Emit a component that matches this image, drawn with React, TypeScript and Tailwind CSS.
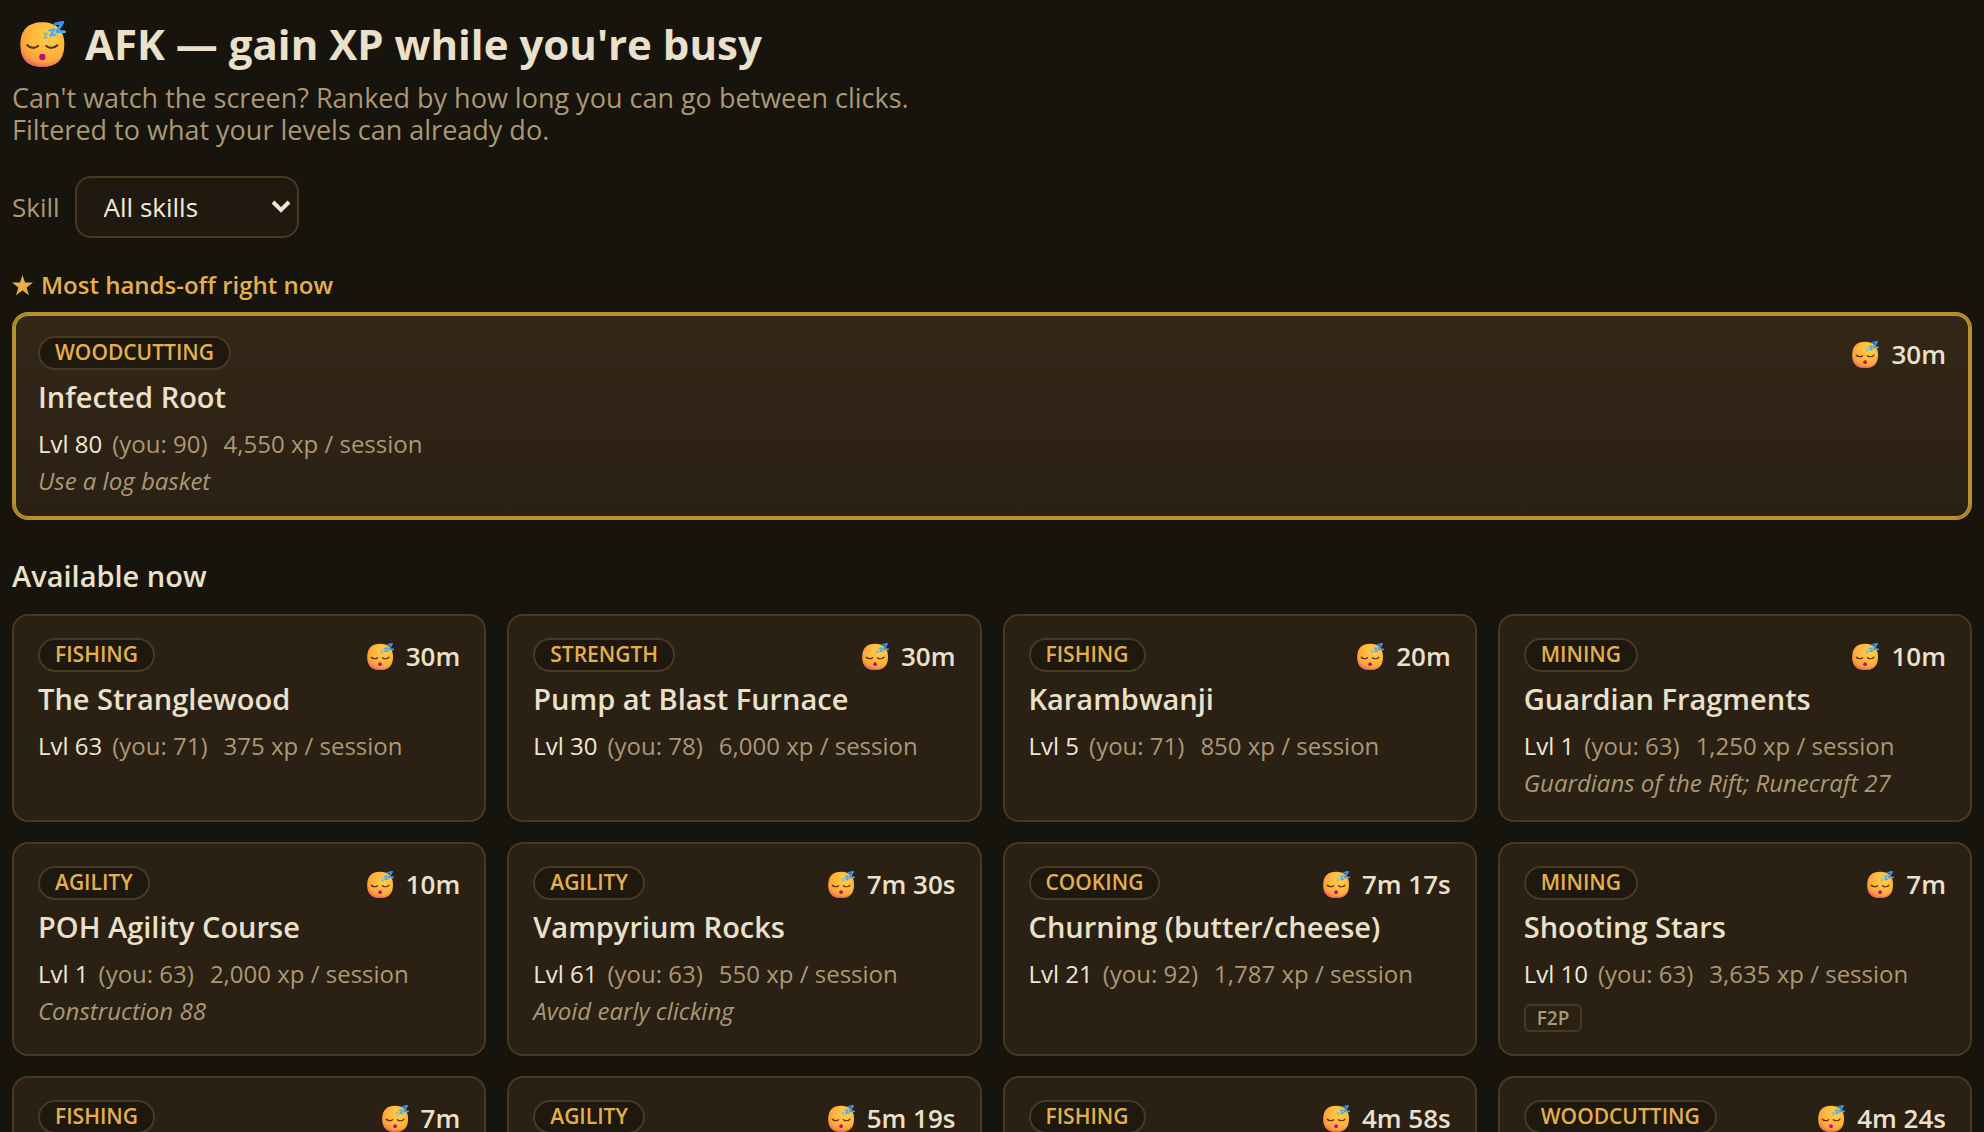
import { useId } from "react";

type Method = {
  skill: string;
  time: string;
  name?: string;
  level?: number;
  you?: number;
  xp?: string;
  note?: string;
  f2p?: boolean;
};

const best: Method = {
  skill: "Woodcutting",
  time: "30m",
  name: "Infected Root",
  level: 80,
  you: 90,
  xp: "4,550",
  note: "Use a log basket",
};

const methods: Method[] = [
  { skill: "Fishing", time: "30m", name: "The Stranglewood", level: 63, you: 71, xp: "375" },
  { skill: "Strength", time: "30m", name: "Pump at Blast Furnace", level: 30, you: 78, xp: "6,000" },
  { skill: "Fishing", time: "20m", name: "Karambwanji", level: 5, you: 71, xp: "850" },
  { skill: "Mining", time: "10m", name: "Guardian Fragments", level: 1, you: 63, xp: "1,250", note: "Guardians of the Rift; Runecraft 27" },
  { skill: "Agility", time: "10m", name: "POH Agility Course", level: 1, you: 63, xp: "2,000", note: "Construction 88" },
  { skill: "Agility", time: "7m 30s", name: "Vampyrium Rocks", level: 61, you: 63, xp: "550", note: "Avoid early clicking" },
  { skill: "Cooking", time: "7m 17s", name: "Churning (butter/cheese)", level: 21, you: 92, xp: "1,787" },
  { skill: "Mining", time: "7m", name: "Shooting Stars", level: 10, you: 63, xp: "3,635", f2p: true },
  { skill: "Fishing", time: "7m" },
  { skill: "Agility", time: "5m 19s" },
  { skill: "Fishing", time: "4m 58s" },
  { skill: "Woodcutting", time: "4m 24s" },
];

function SleepyFace({ className }: { className: string }) {
  const id = useId();
  const skin = `${id}-skin`;
  const blush = `${id}-blush`;
  const zed = `${id}-zed`;
  return (
    <svg viewBox="20 20 138 138" className={className} aria-hidden="true">
      <defs>
        <radialGradient id={skin} cx="0.66" cy="0.3" r="0.75">
          <stop offset="0" stopColor="#ffd04a" />
          <stop offset="0.55" stopColor="#ffb63c" />
          <stop offset="1" stopColor="#f79a3a" />
        </radialGradient>
        <radialGradient id={blush} cx="0.56" cy="0.3" r="0.72">
          <stop offset="0.82" stopColor="#f0605f" stopOpacity="0" />
          <stop offset="1" stopColor="#ee5f78" stopOpacity="0.9" />
        </radialGradient>
        <linearGradient id={zed} x1="0" y1="0" x2="1" y2="1">
          <stop offset="0" stopColor="#2f7fe6" />
          <stop offset="1" stopColor="#45b4fb" />
        </linearGradient>
      </defs>
      <path
        d="M87 24C128 24 153 46 153 91C153 136 130 157 87 157C44 157 21 136 21 91C21 46 46 24 87 24Z"
        fill={`url(#${skin})`}
      />
      <path
        d="M87 24C128 24 153 46 153 91C153 136 130 157 87 157C44 157 21 136 21 91C21 46 46 24 87 24Z"
        fill={`url(#${blush})`}
      />
      <g fill="none" stroke="#5a3225" strokeWidth="6.5" strokeLinecap="round">
        <path d="M42 93C50 102 65 103 74 95" />
        <path d="M99 95C108 103 123 102 132 93" />
      </g>
      <ellipse cx="87" cy="128" rx="9.5" ry="10" fill="#bd0a86" />
      <g fill="none" strokeLinejoin="round" strokeLinecap="round">
        <path d="M92 58L102 57L92 71L103 70" stroke="#8fb3b5" strokeWidth="5" />
        <path d="M108 48L123 45L111 64L126 61" stroke="#4cadea" strokeWidth="7" />
        <path d="M125 29L148 24L131 52L153 52" stroke={`url(#${zed})`} strokeWidth="9" />
      </g>
    </svg>
  );
}

function MethodCard({ method, featured = false }: { method: Method; featured?: boolean }) {
  const look = featured
    ? "border-[#b8912f] bg-linear-to-b from-[#342718] to-[#2a2014] shadow-[inset_0_0_0_2px_#b8912f]"
    : "border-[#483a21] bg-[#2a2014]";
  return (
    <article className={`min-h-[208px] rounded-2xl border-2 px-6 py-[22px] ${look}`}>
      <div className="flex items-start justify-between">
        <span className="h-[34px] rounded-full border-2 border-[#483a21] bg-[#1e180f] px-[15px] text-[21px] leading-7 font-semibold text-[#e3b04b] uppercase">
          {method.skill}
        </span>
        <span className="flex h-9 items-center gap-3 text-[26px] leading-9 font-semibold">
          <SleepyFace className="size-[27px]" />
          {method.time}
        </span>
      </div>
      {method.name && (
        <>
          <h3 className="mt-[5px] text-[29px] leading-10 font-semibold">{method.name}</h3>
          <p className="mt-[11px] flex flex-wrap text-2xl leading-8 text-[#ab9875]">
            <span className="mr-2.5 text-[#f0e6d2]">Lvl {method.level}</span>
            <span className="mr-4">(you: {method.you})</span>
            <span>{method.xp} xp / session</span>
          </p>
        </>
      )}
      {method.note && <p className="mt-1.5 text-2xl leading-[30px] text-[#ab9875] italic">{method.note}</p>}
      {method.f2p && (
        <div className="mt-3.5 flex">
          <span className="h-7 rounded-md border-2 border-[#483a21] px-[11px] text-[19px] leading-6 font-semibold text-[#ab9875]">
            F2P
          </span>
        </div>
      )}
    </article>
  );
}

export default function App() {
  return (
    <main className="h-screen overflow-hidden bg-[#17130d] px-3 pt-4 font-['Open_Sans','Noto_Sans',sans-serif] text-[#ebe0ca]">
      <h1 className="flex items-center gap-[19px] pl-2 text-[42px] leading-14 font-bold">
        <SleepyFace className="size-[46px] shrink-0" />
        AFK — gain XP while you're busy
      </h1>
      <p className="mt-2.5 text-[27px] leading-8 text-[#ab9875]">
        Can't watch the screen? Ranked by how long you can go between clicks.
        <br />
        Filtered to what your levels can already do.
      </p>

      <div className="mt-[30px] flex items-center gap-[15px]">
        <label htmlFor="skill" className="text-[26px] text-[#ab9875]">
          Skill
        </label>
        <div className="relative">
          <select
            id="skill"
            className="h-[62px] w-56 appearance-none rounded-2xl border-2 border-[#483a21] bg-[#201910] pl-[27px] text-[26px] text-[#f3ead8]"
          >
            <option>All skills</option>
          </select>
          <svg viewBox="0 0 20 14" className="pointer-events-none absolute top-6 right-2 h-[14px] w-5" aria-hidden="true">
            <path d="M2 2L10 10L18 2" fill="none" stroke="#efe6d4" strokeWidth="4" />
          </svg>
        </div>
      </div>

      <section>
        <h2 className="mt-[31px] flex items-center gap-2 text-2xl leading-8 font-semibold text-[#e3b04b]">
          <svg viewBox="0 0 20 20" className="size-[21px]" aria-hidden="true">
            <path d="M10 0L12.4 7.2H20L13.9 11.8L16.2 19.3L10 14.8L3.8 19.3L6.1 11.8L0 7.2H7.6Z" fill="currentColor" />
          </svg>
          Most hands-off right now
        </h2>
        <div className="mt-[11px]">
          <MethodCard method={best} featured />
        </div>
      </section>

      <section>
        <h2 className="mt-9 text-[29px] leading-10 font-semibold">Available now</h2>
        <div className="mt-[18px] grid grid-cols-1 gap-x-[21px] gap-y-5 sm:grid-cols-2 lg:grid-cols-4">
          {methods.map((method, i) => (
            <MethodCard key={i} method={method} />
          ))}
        </div>
      </section>
    </main>
  );
}
